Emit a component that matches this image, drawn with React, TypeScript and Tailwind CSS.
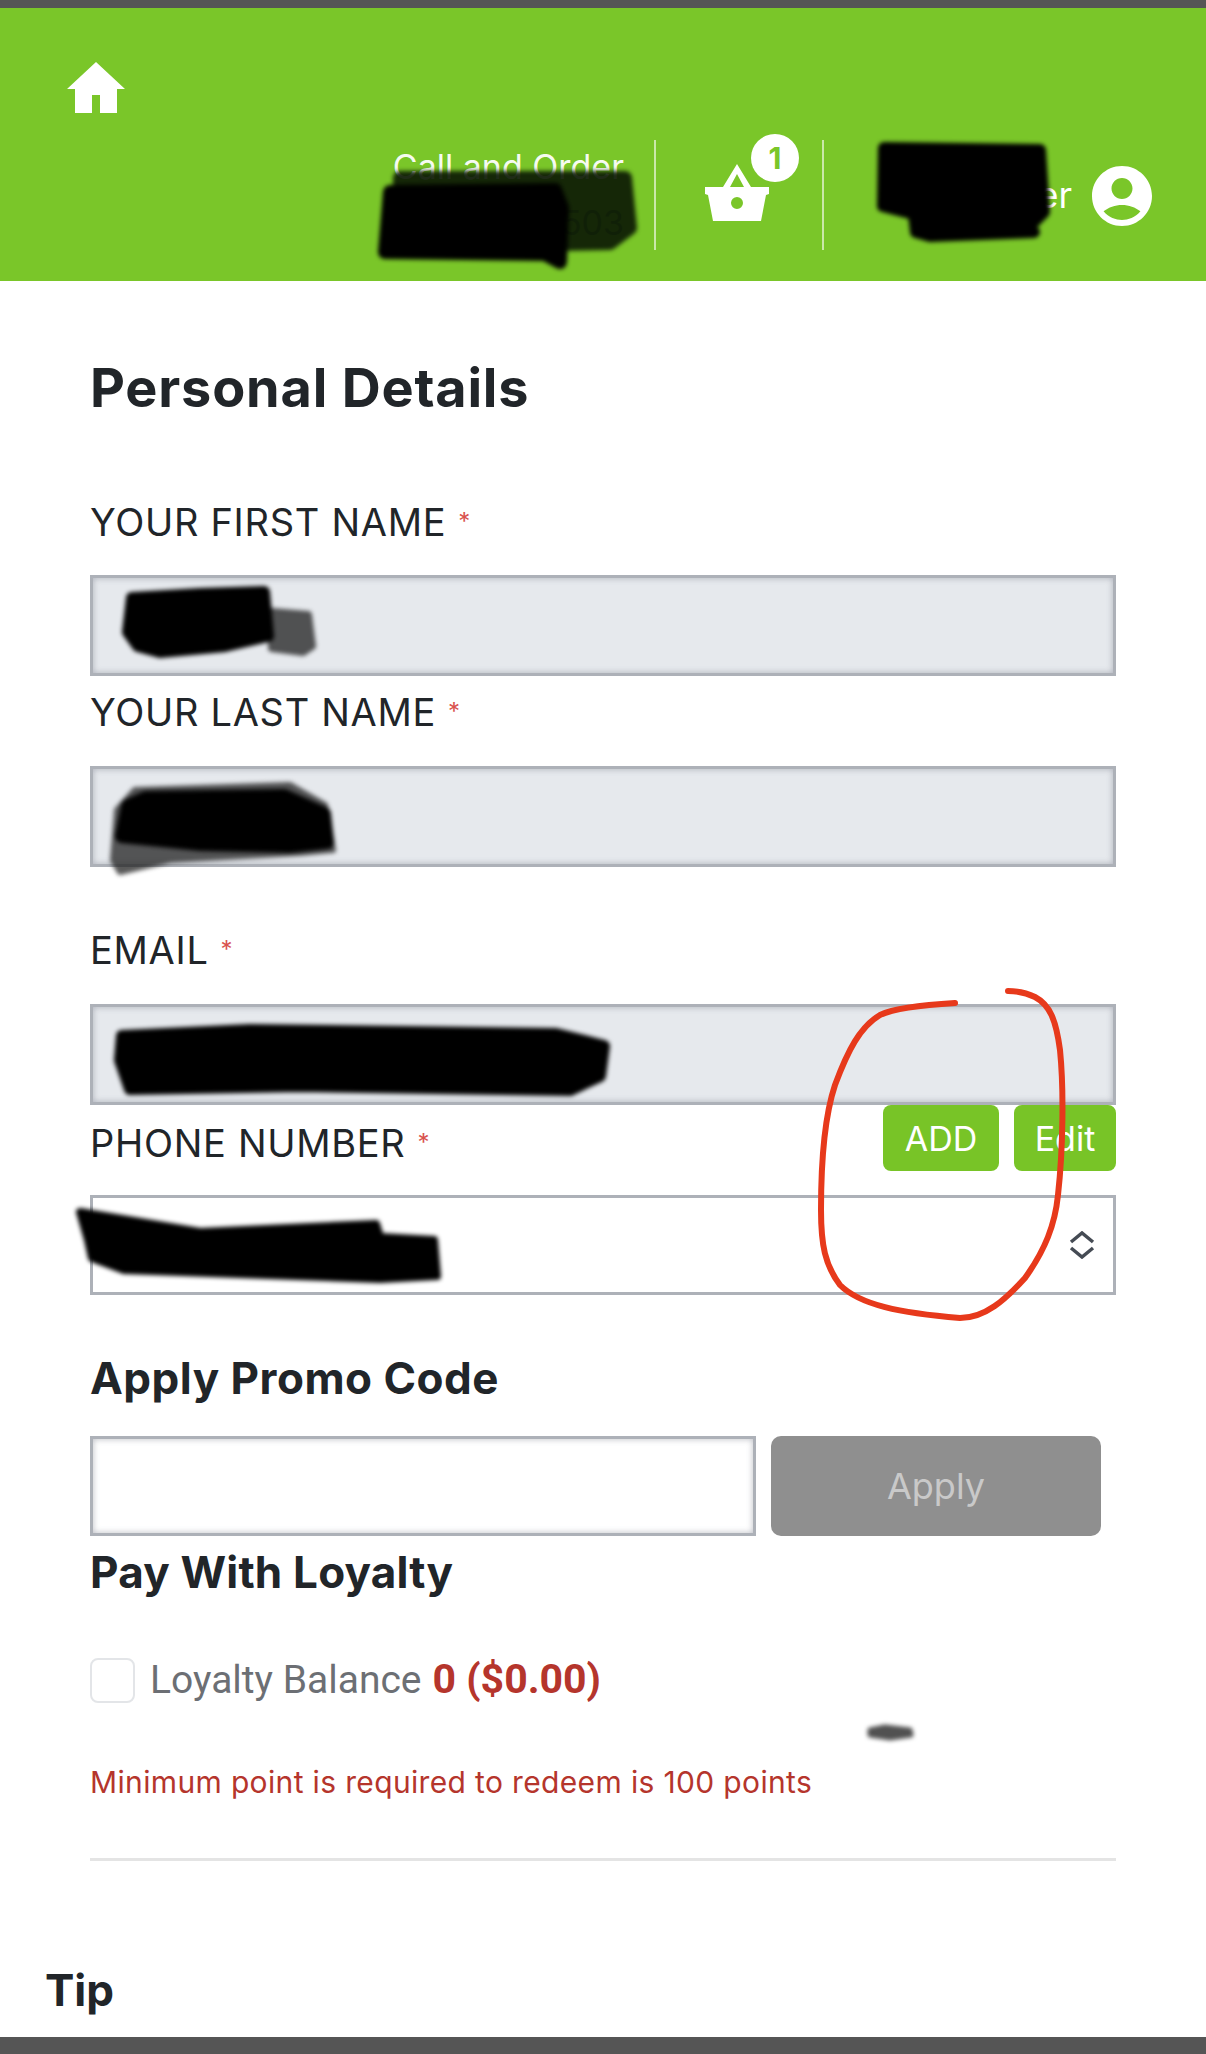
export default function App() {
  const label = "block text-[38px] leading-[46px] text-[#212529] tracking-[0.7px]";
  const star = "text-[24px] text-[#d9534f] align-[6px] ml-3";
  const box = "block w-full h-[101px] border-[3px] border-[#adb1b8] shadow-[inset_0_0_6px_rgba(100,105,120,0.45)] outline-none";
  return (
    <div className="relative w-[1206px] h-[2054px] flex flex-col overflow-hidden bg-white font-['Inter',sans-serif]">
      <div className="h-2 bg-[#555555]" />
      <header className="h-[273px] bg-[#7ac629] flex flex-col px-[54px] pt-[54px]">
        <svg viewBox="0 0 58 51" className="w-[58px] h-[51px] ml-[13px]" fill="white">
          <path d="M29 0 58 27H50V51H33V33H25V51H8V27H0Z" />
        </svg>
        <div className="mt-[27px] h-[110px] flex items-center justify-end text-white">
          <div className="w-[240px] h-full text-right text-[34px] leading-[40px] pt-[7px] pr-[8px] text-white/95 whitespace-nowrap">
            <div>Call and Order</div>
            <div className="mt-[16px] text-[#46702a]">503</div>
          </div>
          <div className="w-[2px] h-full bg-white/60 mx-[22px]" />
          <div className="relative w-[64px] h-full ml-[27px] mr-[53px]">
            <svg viewBox="0 0 64 57" className="absolute left-0 top-[24px] w-[64px] h-[57px]" fill="white">
              <path fillRule="evenodd" d="M32 0 46 23H64V30L61 31 56 57H8L3 31 0 30V23H18ZM32 10 25 23H39ZM32 33A6 6 0 1 0 32 45 6 6 0 1 0 32 33Z" />
            </svg>
            <div className="absolute left-[46px] -top-[6px] w-[48px] h-[48px] rounded-full bg-white text-[#7ac629] text-[30px] font-bold leading-[48px] text-center">1</div>
          </div>
          <div className="w-[2px] h-full bg-white/60 mr-[49px]" />
          <div className="flex items-center gap-[20px] w-[279px] justify-end">
            <span className="text-[36px]">Customer</span>
            <svg viewBox="2 2 20 20" className="w-[60px] h-[60px] shrink-0 mt-[2px]" fill="white">
              <path fillRule="evenodd" d="M12 2C6.48 2 2 6.48 2 12s4.48 10 10 10 10-4.48 10-10S17.52 2 12 2zm0 4c1.93 0 3.5 1.57 3.5 3.5S13.93 13 12 13s-3.5-1.57-3.5-3.5S10.07 6 12 6zm0 14c-2.03 0-4.43-.82-6.14-2.88C7.55 15.8 9.68 15 12 15s4.45.8 6.14 2.12C16.43 19.18 14.03 20 12 20z" />
            </svg>
          </div>
        </div>
      </header>

      <main className="flex-1 flex flex-col px-[90px]">
        <h1 className="mt-[71px] text-[54px] leading-[72px] font-bold text-[#212529] tracking-[0.8px]">Personal Details</h1>
        <label className={`${label} mt-[75px]`}>YOUR FIRST NAME<span className={star}>*</span></label>
        <input disabled className={`${box} mt-[30px] bg-[#e6e9ed]`} />
        <label className={`${label} mt-[13px]`}>YOUR LAST NAME<span className={star}>*</span></label>
        <input disabled className={`${box} mt-[31px] bg-[#e6e9ed]`} />
        <label className={`${label} mt-[60px]`}>EMAIL<span className={star}>*</span></label>
        <input disabled className={`${box} mt-[31px] bg-[#e6e9ed]`} />
        <div className="h-[90px] flex items-start justify-between">
          <label className={`${label} mt-[15px]`}>PHONE NUMBER<span className={star}>*</span></label>
          <div className="flex gap-[15px]">
            <button className="w-[116px] h-[66px] rounded-[8px] bg-[#78c427] text-white text-[34px]">ADD</button>
            <button className="w-[102px] h-[66px] rounded-[8px] bg-[#78c427] text-white text-[34px]">Edit</button>
          </div>
        </div>
        <div className="h-[100px] border-[3px] border-[#adb1b8] flex items-center justify-end pr-[18px]">
          <svg viewBox="0 0 26 28" className="w-[26px] h-[28px]" fill="none" stroke="#454b54" strokeWidth="3.5">
            <path d="M2 11 13 2 24 11M2 17 13 26 24 17" />
          </svg>
        </div>
        <h2 className="mt-[56px] text-[44px] leading-[54px] font-bold text-[#212529] tracking-[0.5px]">Apply Promo Code</h2>
        <div className="mt-[31px] flex gap-[15px]">
          <input className="w-[666px] h-[100px] border-[3px] border-[#adb1b8] bg-white shadow-[inset_0_0_6px_rgba(100,105,120,0.45)] outline-none" />
          <button className="w-[330px] h-[100px] rounded-[10px] bg-[#8f8f8f] text-[#c9c9c9] text-[36px]">Apply</button>
        </div>
        <h2 className="mt-[9px] text-[44px] leading-[54px] font-bold text-[#212529] tracking-[0.2px]">Pay With Loyalty</h2>
        <div className="mt-[58px] flex items-center h-[46px]">
          <div className="w-[45px] h-[45px] rounded-[8px] border-[2px] border-[#e3e5e8] bg-white" />
          <span className="ml-[15px] text-[39px] text-[#6c6f74] font-['Roboto',sans-serif]">Loyalty Balance</span>
          <span className="ml-[11px] text-[41px] font-bold text-[#b5352c] font-['Roboto',sans-serif]">0 ($0.00)</span>
        </div>
        <p className="mt-[59px] text-[30px] leading-[40px] text-[#b5352c] tracking-[0.35px]">Minimum point is required to redeem is 100 points</p>
        <hr className="mt-[56px] border-0 h-[3px] bg-[#e4e4e4]" />
        <h2 className="mt-[102px] -ml-[45px] text-[44px] leading-[54px] font-bold text-[#212529]">Tip</h2>
      </main>
      <div className="h-[17px] bg-[#555555]" />

      <svg viewBox="0 0 1206 2054" className="absolute inset-0 w-[1206px] h-[2054px] pointer-events-none">
        <g className="blur-[2px]" strokeLinejoin="round">
          <path d="M400 178 625 178 630 228 610 243 560 244 400 234Z" fill="#0c1a05" stroke="#0c1a05" strokeWidth="14" opacity="0.92" />
          <path d="M390 192 555 190 562 208 560 262 545 254 385 252Z" fill="#000" stroke="#000" strokeWidth="14" />
          <path d="M884 148 1040 150 1044 212 1028 228 1034 232 930 236 916 232 914 214 883 206Z" fill="#000" stroke="#000" strokeWidth="12" />
          <path d="M272 612 308 615 312 646 303 652 272 648Z" fill="#111" opacity="0.7" stroke="#111" strokeWidth="8" />
          <path d="M132 598 200 594 264 592 268 636 225 646 160 652 138 646 128 632Z" fill="#000" stroke="#000" strokeWidth="12" />
          <path d="M113 860 117 810 135 790 290 785 325 805 333 850 300 853 170 860 120 872Z" fill="#222" opacity="0.75" stroke="#222" strokeWidth="6" />
          <path d="M122 836 128 806 146 798 284 796 324 814 327 842 290 846 200 844Z" fill="#000" stroke="#000" strokeWidth="14" />
          <path d="M122 1036 250 1030 556 1034 604 1046 600 1076 570 1090 300 1086 130 1089 120 1060Z" fill="#000" stroke="#000" strokeWidth="12" />
          <path d="M80 1212 200 1232 376 1224 380 1237 434 1240 437 1276 380 1279 124 1270 92 1258 88 1240Z" fill="#000" stroke="#000" strokeWidth="8" />
          <path d="M870 1730 885 1727 910 1730 911 1735 890 1738 870 1735Z" fill="#333" opacity="0.85" stroke="#333" strokeWidth="5" />
        </g>
        <path
          d="M955 1003C920 1005 895 1008 880 1015C860 1027 848 1050 835 1085C825 1115 821 1160 821 1210C821 1245 825 1265 840 1285C860 1305 900 1313 960 1318C985 1318 1005 1300 1025 1278C1045 1250 1055 1225 1058 1195C1063 1150 1064 1090 1060 1050C1056 1020 1050 1005 1035 997C1025 992 1015 991 1008 991"
          fill="none"
          stroke="#e7391b"
          strokeWidth="6"
          strokeLinecap="round"
        />
      </svg>
    </div>
  );
}
